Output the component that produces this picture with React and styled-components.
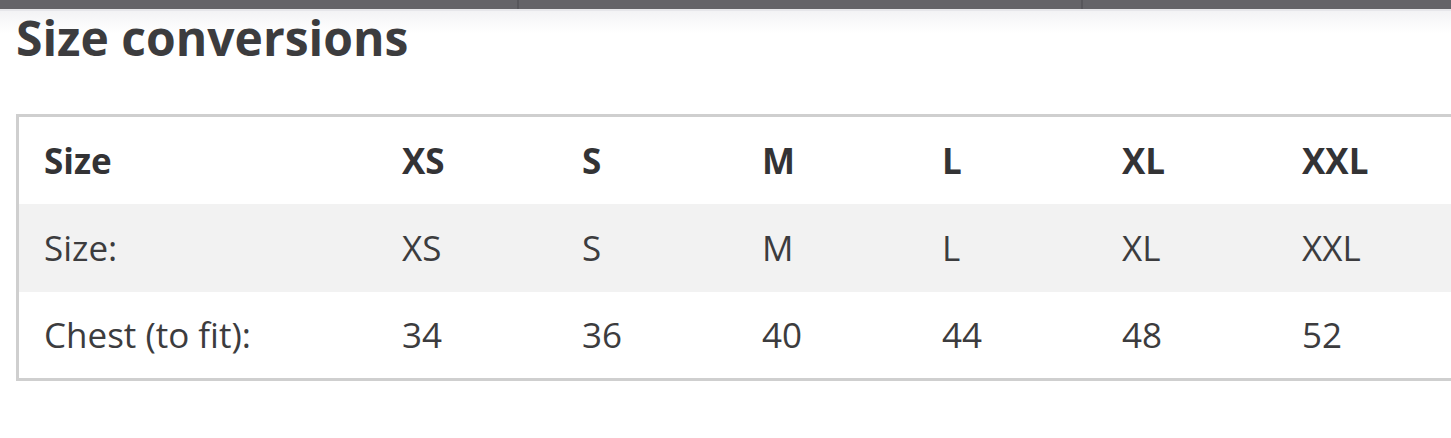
import React from 'react'
import styled, { createGlobalStyle } from 'styled-components'

const Global = createGlobalStyle`
  html, body {
    margin: 0;
    padding: 0;
    background: #fff;
    overflow: hidden;
  }
  body {
    font-family: "Open Sans", "Liberation Sans", sans-serif;
    color: #3a3a3c;
  }
`

const TopBar = styled.div`
  display: flex;
  height: 9px;
  background: #646368;
`

const BarSegment = styled.div`
  width: ${(p) => p.w}px;
  flex: ${(p) => (p.w ? 'none' : 1)};
  border-right: ${(p) => (p.w ? '2px solid #57565b' : 'none')};
`

const Shade = styled.div`
  height: 22px;
  border-top: 2px solid #e6e6ea;
  background: linear-gradient(#f3f3f5, #fff);
`

const Page = styled.div`
  padding: 0 0 0 16px;
  margin-top: -27px;
  position: relative;
`

const Title = styled.h2`
  margin: 0 0 44px;
  font-size: 48px;
  line-height: 64px;
  font-weight: 700;
  color: #3c3c3e;
`

const Table = styled.div`
  width: 1438px;
  border: 3px solid #cfcfcf;
`

const Row = styled.div`
  display: grid;
  grid-template-columns: 358px repeat(6, 180px);
  align-items: center;
  height: ${(p) => p.h}px;
  background: ${(p) => (p.shaded ? '#f2f2f2' : '#fff')};
  font-weight: ${(p) => (p.head ? 700 : 400)};
  color: ${(p) => (p.head ? '#333335' : '#3c3c3e')};
`

const Cell = styled.div`
  padding-left: 25px;
  font-size: 35px;
  line-height: 48px;
  white-space: nowrap;
`

const sizes = ['XS', 'S', 'M', 'L', 'XL', 'XXL']
const chest = ['34', '36', '40', '44', '48', '52']

const App = () => (
  <>
    <Global />
    <TopBar>
      <BarSegment w={517} />
      <BarSegment w={562} />
      <BarSegment />
    </TopBar>
    <Shade />
    <Page>
      <Title>Size conversions</Title>
      <Table>
        <Row h={87} head>
          <Cell>Size</Cell>
          {sizes.map((s) => <Cell key={s}>{s}</Cell>)}
        </Row>
        <Row h={88} shaded>
          <Cell>Size:</Cell>
          {sizes.map((s) => <Cell key={s}>{s}</Cell>)}
        </Row>
        <Row h={86}>
          <Cell>Chest (to fit):</Cell>
          {chest.map((c, i) => <Cell key={i}>{c}</Cell>)}
        </Row>
      </Table>
    </Page>
  </>
)

export default App
